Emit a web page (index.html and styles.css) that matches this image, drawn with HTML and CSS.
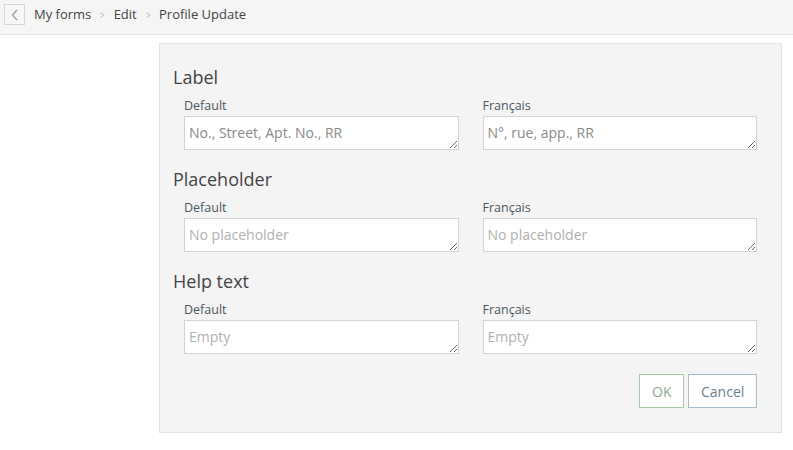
FILE: index.html
```html
<!DOCTYPE html>
<html>
<head>
<meta charset="utf-8">
<link rel="stylesheet" href="styles.css">
</head>
<body>
<div class="topbar">
  <button class="back" aria-label="Back">
    <svg width="8" height="12" viewBox="0 0 8 12"><path d="M6 1 L1.5 6 L6 11" fill="none" stroke="#9aa4ad" stroke-width="1.4"/></svg>
  </button>
  <nav class="crumbs">
    <span class="crumb">My forms</span>
    <span class="sep">&gt;</span>
    <span class="crumb">Edit</span>
    <span class="sep">&gt;</span>
    <span class="crumb">Profile Update</span>
  </nav>
</div>
<div class="main">
  <div class="panel">
    <section class="group">
      <h2>Label</h2>
      <div class="cols">
        <div class="col"><label>Default</label><textarea class="val">No., Street, Apt. No., RR</textarea></div>
        <div class="col"><label>Français</label><textarea class="val">N°, rue, app., RR</textarea></div>
      </div>
    </section>
    <section class="group">
      <h2>Placeholder</h2>
      <div class="cols">
        <div class="col"><label>Default</label><textarea placeholder="No placeholder"></textarea></div>
        <div class="col"><label>Français</label><textarea placeholder="No placeholder"></textarea></div>
      </div>
    </section>
    <section class="group">
      <h2>Help text</h2>
      <div class="cols">
        <div class="col"><label>Default</label><textarea placeholder="Empty"></textarea></div>
        <div class="col"><label>Français</label><textarea placeholder="Empty"></textarea></div>
      </div>
    </section>
    <div class="actions">
      <button class="btn ok">OK</button>
      <button class="btn cancel">Cancel</button>
    </div>
  </div>
</div>
</body>
</html>
```
FILE: styles.css
```css
* { box-sizing: border-box; }
body {
  margin: 0;
  font-family: "Open Sans", "Liberation Sans", sans-serif;
  background: #fff;
  color: #444;
}
.topbar {
  height: 35px;
  background: #f5f5f5;
  border-bottom: 1px solid #e3e3e3;
  display: flex;
  align-items: flex-start;
  padding: 4px 0 0 4px;
}
.back {
  width: 21px;
  height: 21px;
  border: 1px solid #d6d6d6;
  background: #f7f7f7;
  padding: 0;
  display: flex;
  align-items: center;
  justify-content: center;
}
.crumbs {
  display: flex;
  align-items: center;
  height: 20px;
  margin-left: 9px;
  font-size: 13px;
  color: #444;
}
.sep {
  color: #aab3ba;
  font-size: 11px;
  margin: 0 8px;
  transform: scaleX(0.7);
}
.main {
  padding: 8px 11px 0 159px;
}
.panel {
  background: #f4f4f4;
  border: 1px solid #e2e2e2;
  padding: 20px 12px 24px 12px;
}
.group h2 {
  margin: 0 0 0 1px;
  font-weight: 400;
  font-size: 18px;
  line-height: 26px;
  color: #444;
}
.cols {
  display: grid;
  grid-template-columns: 1fr 1fr;
}
.col {
  padding: 0 12px;
  display: flex;
  flex-direction: column;
}
.col label {
  font-size: 12.5px;
  line-height: 17px;
  margin-top: 7px;
  color: #4b5660;
}
textarea {
  height: 34px;
  margin-top: 2px;
  margin-bottom: 0;
  border: 1px solid #d3d3d3;
  background: #fff;
  font-family: inherit;
  font-size: 14px;
  line-height: 20px;
  padding: 6px 4px 4px;
  resize: vertical;
  color: #8a8a8a;
  overflow: hidden;
}
textarea::placeholder { color: #b0b0b0; }
.group + .group { margin-top: 16px; }
.actions {
  display: flex;
  justify-content: flex-end;
  gap: 4px;
  padding: 0 12px;
  margin-top: 20px;
}
.btn {
  height: 34px;
  background: #fff;
  font-family: inherit;
  font-size: 14px;
  padding: 0 12px;
}
.ok { border: 1px solid #a7c9a7; color: #86a88e; width: 45px; }
.cancel { border: 1px solid #a9bccb; color: #6b7f8f; width: 69px; }
```
